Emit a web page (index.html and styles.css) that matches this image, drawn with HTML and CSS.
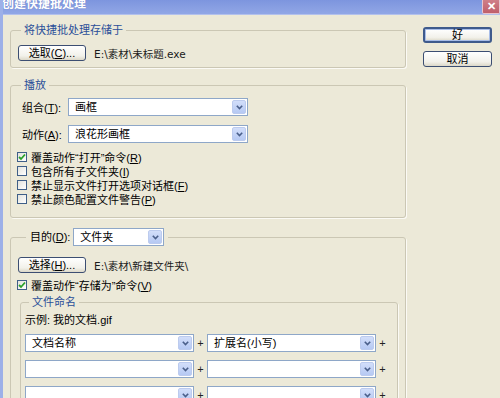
FILE: index.html
```html
<!DOCTYPE html>
<html lang="zh-CN">
<head>
    <meta charset="UTF-8">
    <title>创建快捷批处理</title>
    <link rel="stylesheet" href="styles.css">
</head>
<body>
    <div class="window">
        <div class="titlebar">
            <span class="title">创建快捷批处理</span>
            <span class="close">✕</span>
        </div>
        <div class="dialog">
            <div class="main">
                <!-- 存储位置 -->
                <div class="group save-group">
                    <div class="group-title">将快捷批处理存储于</div>
                    <div class="path-row">
                        <button class="btn">选取(<u>C</u>)...</button>
                        <span class="path">E:\素材\未标题.exe</span>
                    </div>
                </div>

                <!-- 播放 -->
                <div class="group play-group">
                    <div class="group-title">播放</div>
                    <div class="field-row">
                        <label class="field-label">组合(<u>T</u>):</label>
                        <div class="select wide">
                            <span class="select-text">画框</span>
                            <span class="select-arrow"><svg width="7" height="5" viewBox="0 0 7 5"><path d="M0.8 0.8 L3.5 3.6 L6.2 0.8" /></svg></span>
                        </div>
                    </div>
                    <div class="field-row second">
                        <label class="field-label">动作(<u>A</u>):</label>
                        <div class="select wide">
                            <span class="select-text">浪花形画框</span>
                            <span class="select-arrow"><svg width="7" height="5" viewBox="0 0 7 5"><path d="M0.8 0.8 L3.5 3.6 L6.2 0.8" /></svg></span>
                        </div>
                    </div>
                    <div class="checks">
                        <div class="check">
                            <span class="box"><svg width="8" height="8" viewBox="0 0 8 8"><path d="M1 4 L3 6 L7 1.5" /></svg></span>
                            <span>覆盖动作“打开”命令(<u>R</u>)</span>
                        </div>
                        <div class="check">
                            <span class="box"></span>
                            <span>包含所有子文件夹(<u>I</u>)</span>
                        </div>
                        <div class="check">
                            <span class="box"></span>
                            <span>禁止显示文件打开选项对话框(<u>F</u>)</span>
                        </div>
                        <div class="check">
                            <span class="box"></span>
                            <span>禁止颜色配置文件警告(<u>P</u>)</span>
                        </div>
                    </div>
                </div>

                <!-- 目的 -->
                <div class="group dest-group">
                    <div class="group-title dest-title">
                        <label class="dest-label">目的(<u>D</u>):</label>
                        <div class="select short">
                            <span class="select-text">文件夹</span>
                            <span class="select-arrow"><svg width="7" height="5" viewBox="0 0 7 5"><path d="M0.8 0.8 L3.5 3.6 L6.2 0.8" /></svg></span>
                        </div>
                    </div>
                    <div class="path-row dest-path">
                        <button class="btn">选择(<u>H</u>)...</button>
                        <span class="path">E:\素材\新建文件夹\</span>
                    </div>
                    <div class="checks dest-check">
                        <div class="check">
                            <span class="box"><svg width="8" height="8" viewBox="0 0 8 8"><path d="M1 4 L3 6 L7 1.5" /></svg></span>
                            <span>覆盖动作“存储为”命令(<u>V</u>)</span>
                        </div>
                    </div>

                    <div class="group naming-group">
                        <div class="group-title naming-title">文件命名</div>
                        <div class="example">示例: 我的文档.gif</div>
                        <div class="name-rows">
                            <div class="name-row">
                                <div class="select name">
                                    <span class="select-text">文档名称</span>
                                    <span class="select-arrow"><svg width="7" height="5" viewBox="0 0 7 5"><path d="M0.8 0.8 L3.5 3.6 L6.2 0.8" /></svg></span>
                                </div>
                                <span class="plus">+</span>
                                <div class="select name">
                                    <span class="select-text">扩展名(小写)</span>
                                    <span class="select-arrow"><svg width="7" height="5" viewBox="0 0 7 5"><path d="M0.8 0.8 L3.5 3.6 L6.2 0.8" /></svg></span>
                                </div>
                                <span class="plus">+</span>
                            </div>
                            <div class="name-row">
                                <div class="select name">
                                    <span class="select-text"></span>
                                    <span class="select-arrow"><svg width="7" height="5" viewBox="0 0 7 5"><path d="M0.8 0.8 L3.5 3.6 L6.2 0.8" /></svg></span>
                                </div>
                                <span class="plus">+</span>
                                <div class="select name">
                                    <span class="select-text"></span>
                                    <span class="select-arrow"><svg width="7" height="5" viewBox="0 0 7 5"><path d="M0.8 0.8 L3.5 3.6 L6.2 0.8" /></svg></span>
                                </div>
                                <span class="plus">+</span>
                            </div>
                            <div class="name-row">
                                <div class="select name">
                                    <span class="select-text"></span>
                                    <span class="select-arrow"><svg width="7" height="5" viewBox="0 0 7 5"><path d="M0.8 0.8 L3.5 3.6 L6.2 0.8" /></svg></span>
                                </div>
                                <span class="plus">+</span>
                                <div class="select name">
                                    <span class="select-text"></span>
                                    <span class="select-arrow"><svg width="7" height="5" viewBox="0 0 7 5"><path d="M0.8 0.8 L3.5 3.6 L6.2 0.8" /></svg></span>
                                </div>
                                <span class="plus">+</span>
                            </div>
                        </div>
                    </div>
                </div>
            </div>

            <div class="side">
                <button class="btn side-btn default">好</button>
                <button class="btn side-btn">取消</button>
            </div>
        </div>
    </div>
</body>
</html>
```

FILE: styles.css
```css
* {
    box-sizing: border-box;
}

body {
    margin: 0;
    background: #ece9d8;
    font-family: "Liberation Sans", "Noto Sans CJK SC", sans-serif;
    font-size: 11px;
    color: #000;
}

.window {
    width: 500px;
    height: 398px;
    overflow: hidden;
    border-left: 3px solid #9db0e8;
    background: #ece9d8;
}

/* title bar */
.titlebar {
    height: 15px;
    display: flex;
    justify-content: space-between;
    background: linear-gradient(to bottom, #7d95de, #91a7e6);
    border-bottom: 1px solid #b3c1ec;
    overflow: hidden;
}

.title {
    margin: -4px 0 0 -1px;
    color: #fff;
    font-weight: bold;
    font-size: 12px;
    line-height: 16px;
    text-shadow: 0 0 1px #6b7fc0;
}

.close {
    width: 18px;
    height: 14px;
    background: linear-gradient(to bottom, #cf7f88, #bf5f6b);
    border: 1px solid #e8c4cc;
    border-top: none;
    border-radius: 0 0 2px 2px;
    color: #fff;
    font-weight: bold;
    font-size: 11px;
    line-height: 12px;
    text-align: center;
}

.dialog {
    display: flex;
    padding-left: 7px;
}

.main {
    width: 396px;
}

/* group boxes */
.group {
    border: 1px solid #cbc7b4;
    border-radius: 3px;
    box-shadow: 1px 1px 0 #fbfaf5;
}

.group-title {
    width: fit-content;
    margin: -8px 0 0 10px;
    padding: 0 3px;
    background: #ece9d8;
    color: #2b4f99;
    line-height: 14px;
    white-space: nowrap;
}

.save-group {
    margin-top: 15px;
    padding-bottom: 6px;
}

.path-row {
    display: flex;
    align-items: center;
    gap: 8px;
    margin-top: 8px;
    padding-left: 7px;
}

.path {
    font-family: "DejaVu Sans", "Noto Sans CJK SC", sans-serif;
    font-size: 10.5px;
    color: #1a1a1a;
}

/* buttons */
.btn {
    width: 68px;
    height: 16px;
    padding: 0;
    border: 1px solid #3c4e72;
    border-radius: 3px;
    background: linear-gradient(to bottom, #ffffff, #f2f1ea 70%, #dcd8c8);
    font-family: inherit;
    font-size: 11px;
    line-height: 13px;
    color: #000;
}

.side {
    display: flex;
    flex-direction: column;
    gap: 8px;
    margin: 12px 0 0 17px;
}

.side-btn {
    width: 69px;
}

.default {
    border: 2px solid #3e5a8c;
    box-shadow: inset 0 0 0 1px #a8bde8;
    line-height: 12px;
}

/* select boxes */
.field-row {
    display: flex;
    align-items: center;
    margin-top: 6px;
    padding-left: 11px;
}

.field-row.second {
    margin-top: 9px;
}

.field-label {
    width: 46px;
    white-space: nowrap;
}

.select {
    display: flex;
    height: 18px;
    border: 1px solid #8ea7c8;
    background: #fff;
}

.select-text {
    flex: 1;
    padding-left: 6px;
    line-height: 16px;
    white-space: nowrap;
    overflow: hidden;
}

.select-arrow {
    width: 14px;
    margin: 1px;
    display: flex;
    align-items: center;
    justify-content: center;
    border-radius: 2px;
    background: linear-gradient(to bottom, #d2defa, #b6c9f3);
    border: 1px solid #bccbee;
}

.select-arrow path {
    fill: none;
    stroke: #4a5f8a;
    stroke-width: 1.6;
}

.wide {
    width: 180px;
}

.short {
    width: 91px;
}

.name {
    width: 169px;
}

/* check boxes */
.checks {
    margin-top: 7px;
    padding-left: 6px;
}

.check {
    display: flex;
    align-items: center;
    gap: 4px;
    height: 14px;
    white-space: nowrap;
}

.box {
    width: 10px;
    height: 10px;
    display: flex;
    align-items: center;
    justify-content: center;
    border: 1px solid #3f5f88;
    background: linear-gradient(to bottom right, #e2e2dc, #ffffff);
}

.box path {
    fill: none;
    stroke: #2aa12a;
    stroke-width: 1.8;
}

.play-group {
    margin-top: 17px;
    padding-bottom: 11px;
}

/* destination */
.dest-group {
    margin-top: 19px;
    height: 200px;
}

.dest-title {
    display: flex;
    align-items: center;
    gap: 3px;
    margin: -10px 0 0 15px;
    padding: 0 4px;
    color: #000;
}

.dest-label {
    white-space: nowrap;
}

.dest-path {
    margin-top: 11px;
}

.dest-check {
    margin-top: 5px;
}

.naming-group {
    margin: 10px 7px 0 9px;
    height: 120px;
}

.naming-title {
    margin-left: 8px;
}

.example {
    margin-top: 4px;
    padding-left: 4px;
    line-height: 14px;
}

.name-rows {
    display: flex;
    flex-direction: column;
    gap: 8px;
    margin-top: 7px;
    padding-left: 4px;
}

.name-row {
    display: flex;
    align-items: center;
}

.plus {
    width: 13px;
    text-align: center;
    font-size: 11px;
    color: #222;
}
```
